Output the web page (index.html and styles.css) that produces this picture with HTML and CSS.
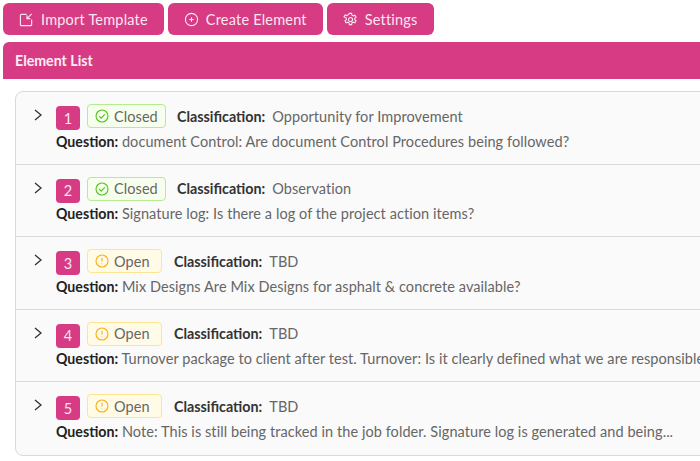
FILE: index.html
```html
<!DOCTYPE html>
<html lang="en">
<head>
    <meta charset="UTF-8">
    <title>Element List</title>
    <link rel="stylesheet" href="styles.css">
</head>
<body>
    <div class="toolbar">
        <button class="btn">
            <svg class="btn-icon" viewBox="0 0 16 16"><path d="M8 2.5H2.5a1 1 0 0 0-1 1v10a1 1 0 0 0 1 1h10a1 1 0 0 0 1-1V8"/><path d="M13.5 2 8.5 7M8.5 3.5V7H12"/></svg>
            Import Template
        </button>
        <button class="btn">
            <svg class="btn-icon" viewBox="0 0 16 16"><circle cx="8" cy="8" r="6.5"/><path d="M8 5.5v5M5.5 8h5"/></svg>
            Create Element
        </button>
        <button class="btn">
            <svg class="btn-icon" viewBox="0 0 16 16"><circle cx="8" cy="8" r="2.2"/><path d="M6.8 1.5h2.4l.4 1.9 1.3.7 1.8-.7 1.2 2.1-1.4 1.3v1.4l1.4 1.3-1.2 2.1-1.8-.7-1.3.7-.4 1.9H6.8l-.4-1.9-1.3-.7-1.8.7-1.2-2.1 1.4-1.3V6.5L1.1 5.2l1.2-2.1 1.8.7 1.3-.7z"/></svg>
            Settings
        </button>
    </div>

    <div class="panel-head">Element List</div>

    <div class="list">
        <div class="row">
            <svg class="chevron" viewBox="0 0 10 12"><path d="M2 1l6 5-6 5"/></svg>
            <div class="row-body">
                <div class="row-top">
                    <span class="num">1</span>
                    <span class="tag tag-closed">
                        <svg class="tag-icon" viewBox="0 0 14 14"><circle cx="7" cy="7" r="6"/><path d="M4.2 7.2l2 2 3.6-3.8"/></svg>
                        Closed
                    </span>
                    <span class="class-label">Classification:</span>
                    <span class="class-value">Opportunity for Improvement</span>
                </div>
                <div class="question"><b>Question:</b> document Control: Are document Control Procedures being followed?</div>
            </div>
        </div>
        <div class="row">
            <svg class="chevron" viewBox="0 0 10 12"><path d="M2 1l6 5-6 5"/></svg>
            <div class="row-body">
                <div class="row-top">
                    <span class="num">2</span>
                    <span class="tag tag-closed">
                        <svg class="tag-icon" viewBox="0 0 14 14"><circle cx="7" cy="7" r="6"/><path d="M4.2 7.2l2 2 3.6-3.8"/></svg>
                        Closed
                    </span>
                    <span class="class-label">Classification:</span>
                    <span class="class-value">Observation</span>
                </div>
                <div class="question"><b>Question:</b> Signature log: Is there a log of the project action items?</div>
            </div>
        </div>
        <div class="row">
            <svg class="chevron" viewBox="0 0 10 12"><path d="M2 1l6 5-6 5"/></svg>
            <div class="row-body">
                <div class="row-top">
                    <span class="num">3</span>
                    <span class="tag tag-open">
                        <svg class="tag-icon" viewBox="0 0 14 14"><circle cx="7" cy="7" r="6"/><path d="M7 3.8v3.8M7 9.4v.9"/></svg>
                        Open
                    </span>
                    <span class="class-label">Classification:</span>
                    <span class="class-value">TBD</span>
                </div>
                <div class="question"><b>Question:</b> Mix Designs Are Mix Designs for asphalt &amp; concrete available?</div>
            </div>
        </div>
        <div class="row">
            <svg class="chevron" viewBox="0 0 10 12"><path d="M2 1l6 5-6 5"/></svg>
            <div class="row-body">
                <div class="row-top">
                    <span class="num">4</span>
                    <span class="tag tag-open">
                        <svg class="tag-icon" viewBox="0 0 14 14"><circle cx="7" cy="7" r="6"/><path d="M7 3.8v3.8M7 9.4v.9"/></svg>
                        Open
                    </span>
                    <span class="class-label">Classification:</span>
                    <span class="class-value">TBD</span>
                </div>
                <div class="question"><b>Question:</b> Turnover package to client after test. Turnover: Is it clearly defined what we are responsible</div>
            </div>
        </div>
        <div class="row">
            <svg class="chevron" viewBox="0 0 10 12"><path d="M2 1l6 5-6 5"/></svg>
            <div class="row-body">
                <div class="row-top">
                    <span class="num">5</span>
                    <span class="tag tag-open">
                        <svg class="tag-icon" viewBox="0 0 14 14"><circle cx="7" cy="7" r="6"/><path d="M7 3.8v3.8M7 9.4v.9"/></svg>
                        Open
                    </span>
                    <span class="class-label">Classification:</span>
                    <span class="class-value">TBD</span>
                </div>
                <div class="question"><b>Question:</b> Note: This is still being tracked in the job folder. Signature log is generated and being...</div>
            </div>
        </div>
    </div>
</body>
</html>
```

FILE: styles.css
```css
html, body{
    height: 100%;
}

body{
    margin: 0;
    padding: 3px 0 0 3px;
    box-sizing: border-box;
    overflow: hidden;
    width: 700px;
    font-family: "Lato", sans-serif;
    font-size: 14.5px;
    letter-spacing: 0.07px;
    color: #666;
    background-color: #fff;
}

.toolbar{
    display: flex;
    gap: 4px;
}

.btn{
    height: 32px;
    padding: 0 16px;
    display: flex;
    align-items: center;
    gap: 7px;
    border: none;
    border-radius: 6px;
    font-family: inherit;
    font-size: 14.5px;
    letter-spacing: 0.2px;
    color: #fbe6f0;
    background-color: #d63b83;
}

.btn-icon{
    width: 15px;
    height: 15px;
    fill: none;
    stroke: #fbe6f0;
    stroke-width: 1.2;
}

.panel-head{
    margin-top: 7px;
    height: 37px;
    line-height: 37px;
    padding-left: 12px;
    border-radius: 6px 0 0 0;
    font-size: 14.2px;
    font-weight: 700;
    letter-spacing: 0;
    color: #fdeef5;
    background-color: #d63b83;
}

.list{
    width: 800px;
    margin: 12px 0 0 12px;
    border: 1px solid #d9d9d9;
    border-radius: 8px;
    background-color: #fafafa;
}

.row{
    height: 72.5px;
    box-sizing: border-box;
    padding: 12px 0 0 17px;
    display: flex;
    gap: 13px;
    border-bottom: 1px solid #d9d9d9;
}

.row:last-child{
    border-bottom: none;
}

.chevron{
    width: 10px;
    height: 12px;
    margin-top: 5px;
    fill: none;
    stroke: #333;
    stroke-width: 1.3;
}

.row-top{
    height: 24px;
    display: flex;
    align-items: center;
}

.num{
    width: 24px;
    height: 24px;
    align-self: flex-start;
    margin-top: 2px;
    display: flex;
    align-items: center;
    justify-content: center;
    border-radius: 4px;
    color: #fbe6f0;
    background-color: #d63b83;
}

.tag{
    height: 24px;
    margin-left: 7px;
    padding: 0 7px;
    display: flex;
    align-items: center;
    gap: 5px;
    box-sizing: border-box;
    border: 1px solid;
    border-radius: 4px;
}

.tag-closed{
    width: 79px;
    border-color: #b7eb8f;
    background-color: #f6ffed;
}

.tag-closed .tag-icon{
    stroke: #52c41a;
}

.tag-closed + .class-label{
    margin-left: 11px;
}

.tag-open{
    width: 75px;
    border-color: #ffe58f;
    background-color: #fffbe6;
}

.tag-open .tag-icon{
    stroke: #faad14;
}

.tag-icon{
    width: 14px;
    height: 14px;
    fill: none;
    stroke-width: 1.1;
}

.class-label{
    margin-left: 12px;
    font-size: 14.3px;
    font-weight: 700;
    letter-spacing: 0;
    color: #333;
}

.class-value{
    margin-left: 7px;
}

.question{
    margin-top: 4.5px;
    white-space: nowrap;
}

.question b{
    font-size: 14.2px;
    letter-spacing: 0;
    color: #222;
}
```
